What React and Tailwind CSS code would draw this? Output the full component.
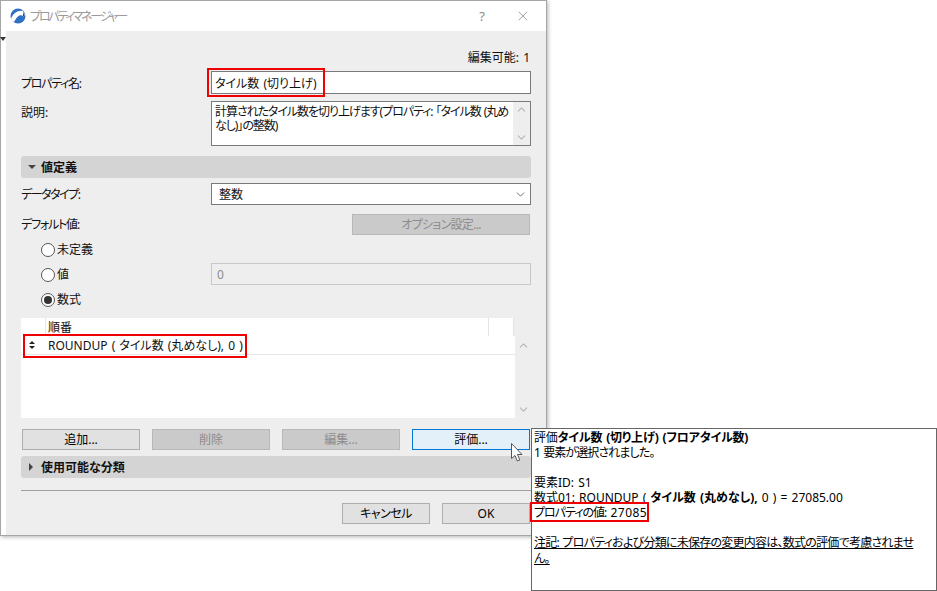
import React from 'react';
import { ChevronDown, ChevronUp, X } from 'lucide-react';

const Btn = ({ children, disabled, hover, className = '' }) => (
  <div
    className={
      'flex h-[21px] items-center justify-center border ' +
      (disabled
        ? 'border-[#b8b8b8] bg-[#cacaca] text-[#8c8c8c] '
        : hover
          ? 'border-[#0078d7] bg-[#e3f0fa] text-black '
          : 'border-[#adadad] bg-[#e1e1e1] text-black ') +
      className
    }
  >
    {children}
  </div>
);

const Radio = ({ checked, label }) => (
  <div className="flex h-[25px] items-center">
    <div className="flex h-[14px] w-[14px] items-center justify-center rounded-full border border-[#555] bg-white">
      {checked && <div className="h-[8px] w-[8px] rounded-full bg-[#333]" />}
    </div>
    <span className="ml-[2px]">{label}</span>
  </div>
);

const SectionBar = ({ open, children, className = '' }) => (
  <div className={'flex h-[22px] items-center rounded-[3px] bg-[#d4d4d4] pl-[7px] font-bold ' + className}>
    {open ? (
      <div className="mr-[5px] h-0 w-0 border-x-[4px] border-t-[4px] border-x-transparent border-t-[#444]" />
    ) : (
      <div className="ml-[1px] mr-[8px] h-0 w-0 border-y-[4px] border-l-[4px] border-y-transparent border-l-[#444]" />
    )}
    {children}
  </div>
);

export default function App() {
  return (
    <div
      className="relative h-[591px] w-[937px] overflow-hidden bg-white text-[12px] leading-[15px] text-[#111] [font-feature-settings:'palt'] [word-spacing:1px]"
      style={{ fontFamily: '"Noto Sans", "Noto Sans CJK JP", sans-serif' }}
    >
      {/* dialog */}
      <div className="flex h-[536px] w-[547px] flex-col border border-[#a6a6a6] bg-white shadow-[1px_1px_4px_rgba(0,0,0,0.3)]">
        <div className="flex h-[30px] shrink-0 items-center pl-[9px]">
          <svg width="16" height="16" viewBox="0 0 16 16">
            <circle cx="8" cy="8" r="7.500" fill="#2f6fc4" />
            <path d="M1 11C3 5 8 2 13 3c1.500 2 2 4 1 6C12 6 8 6 4 14 2.500 13.500 1.500 12.500 1 11z" fill="#ffffff" />
            <path d="M13 3l1.500 6-1.500-1z" fill="#1f3f70" />
          </svg>
          <span className="ml-[4px] tracking-[-2.200px] text-[#9a9a9a]">プロパティマネージャー</span>
          <span className="ml-auto text-[13px] text-[#8a8a8a]">?</span>
          <X size={16} strokeWidth={1} className="ml-[30px] mr-[15px] text-[#777]" />
        </div>

        <div className="relative ml-[5px] flex-1 bg-[#eeeeee] pl-[15px] pr-[15px]">
          <div className="absolute left-[-6px] top-[6px] h-0 w-0 border-x-[3px] border-t-[4px] border-x-transparent border-t-[#333]" />

          <div className="flex h-[40px] items-end justify-end pb-[6px] pr-[1px]">編集可能: 1</div>

          <div className="flex items-center">
            <div className="w-[190px] pt-[1px] tracking-[-1.300px]">プロパティ名:</div>
            <div className="relative flex h-[23px] flex-1 items-center border border-[#7a7a7a] bg-white pl-[3px] pt-[1px]">
              タイル数 (切り上げ)
              <div className="absolute left-[-5px] top-[-4px] h-[29px] w-[118px] border-2 border-[#f00000]" />
            </div>
          </div>

          <div className="mt-[7px] flex">
            <div className="w-[190px] pt-[4px]">説明:</div>
            <div className="flex h-[45px] flex-1 border border-[#7a7a7a] bg-white">
              <div className="flex-1 pl-[3px] pt-[3px] leading-[14px] tracking-[-1.050px]">
                計算されたタイル数を切り上げます(プロパティ: 「タイル数 (丸めなし)」の整数)
              </div>
              <div className="flex w-[17px] flex-col items-center justify-between bg-[#eeeeee] py-[1px] text-[#b5b5b5]">
                <ChevronUp size={13} strokeWidth={2} />
                <ChevronDown size={13} strokeWidth={2} />
              </div>
            </div>
          </div>

          <SectionBar open className="mt-[10px]">値定義</SectionBar>

          <div className="mt-[5px] flex items-center">
            <div className="w-[190px] tracking-[-1.500px]">データタイプ:</div>
            <div className="flex h-[22px] flex-1 items-center justify-between border border-[#7a7a7a] bg-white pl-[7px] pr-[3px]">
              整数
              <ChevronDown size={13} strokeWidth={1.300} className="text-[#333]" />
            </div>
          </div>

          <div className="mt-[9px] flex items-center justify-between pr-[1px]">
            <span className="tracking-[-1.200px]">デフォルト値:</span>
            <Btn disabled className="w-[178px] tracking-[-0.700px]">オプション設定...</Btn>
          </div>

          <div className="mt-[2px] flex flex-col pl-[20px]">
            <Radio label="未定義" />
            <div className="flex items-start">
              <div className="w-[170px]"><Radio label="値" /></div>
              <div className="mt-[1px] flex h-[22px] flex-1 items-center border border-[#c8c8c8] bg-[#eeeeee] pl-[5px] text-[#8c8c8c]">0</div>
            </div>
            <Radio checked label="数式" />
          </div>

          {/* list */}
          <div className="mt-[6px] flex h-[100px]">
            <div className="flex w-[494px] flex-col">
              <div className="flex h-[18px] w-[493px] shrink-0 bg-white">
                <div className="w-[25px] border-r border-[#e4e4e4]" />
                <div className="flex-1 border-r border-[#e4e4e4] pl-[2px] pt-[2px]">順番</div>
                <div className="w-[25px] border-r border-[#e4e4e4]" />
              </div>
              <div className="flex-1 bg-white">
                <div className="relative flex h-[19px] items-center border-b border-[#e8e8e8] pl-[27px]">
                  ROUNDUP ( タイル数 (丸めなし), 0 )
                  <div className="absolute left-[8px] top-[5px] h-0 w-0 border-x-[3px] border-b-[3px] border-x-transparent border-b-[#222]" />
                  <div className="absolute left-[8px] top-[10px] h-0 w-0 border-x-[3px] border-t-[3px] border-x-transparent border-t-[#222]" />
                  <div className="absolute left-[2px] top-[-2px] h-[24px] w-[224px] border-2 border-[#f00000]" />
                </div>
              </div>
            </div>
            <div className="flex flex-1 flex-col items-center justify-between pb-[2px] pt-[21px] text-[#b5b5b5]">
              <ChevronUp size={13} strokeWidth={2} />
              <ChevronDown size={13} strokeWidth={2} />
            </div>
          </div>

          <div className="mt-[11px] grid grid-cols-[118px_118px_118px_118px] gap-x-[12px] pl-[1px]">
            <Btn>追加...</Btn>
            <Btn disabled>削除</Btn>
            <Btn disabled>編集...</Btn>
            <Btn hover>評価...</Btn>
          </div>

          <SectionBar className="mt-[6px]">使用可能な分類</SectionBar>

          <div className="mt-[12px] h-px bg-[#a0a0a0]" />

          <div className="mt-[12px] flex justify-end gap-x-[12px] pr-[1px]">
            <Btn className="w-[88px] tracking-[-0.500px]">キャンセル</Btn>
            <Btn className="w-[88px]">OK</Btn>
          </div>
        </div>
      </div>

      {/* evaluation tooltip */}
      <div className="absolute left-[531px] top-[428px] h-[163px] w-[406px] border border-[#666] bg-white pl-[2px] pr-[20px] pt-[1px] text-black">
        <div className="tracking-[-0.200px]">評価<b>タイル数 (切り上げ) (フロアタイル数)</b></div>
        <div className="tracking-[-0.900px]">1 要素が選択されました。</div>
        <div className="mt-[15px]">要素ID: S1</div>
        <div>数式01: ROUNDUP ( <b>タイル数 (丸めなし),</b> 0 ) = 27085.00</div>
        <div className="relative">
          <span className="tracking-[-1px]">プロパティの値:</span>{' '}
          <span className="tracking-[0.500px]">27085</span>
          <div className="absolute left-[-4px] top-[-3px] h-[20px] w-[119px] border-2 border-[#f00000]" />
        </div>
        <div className="mt-[15px] leading-[16px] tracking-[-0.750px] underline">
          注記: プロパティおよび分類に未保存の変更内容は、数式の評価で考慮されません。
        </div>
      </div>

      {/* mouse cursor */}
      <svg className="absolute left-[510px] top-[442px]" width="14" height="21" viewBox="0 0 14 21">
        <path
          d="M1.500 1.500v15l3.500-3 2.300 5.500 2.500-1-2.300-5.500h4.500z"
          fill="#ffffff"
          stroke="#555555"
          strokeWidth="1"
          strokeLinejoin="round"
        />
      </svg>
    </div>
  );
}
